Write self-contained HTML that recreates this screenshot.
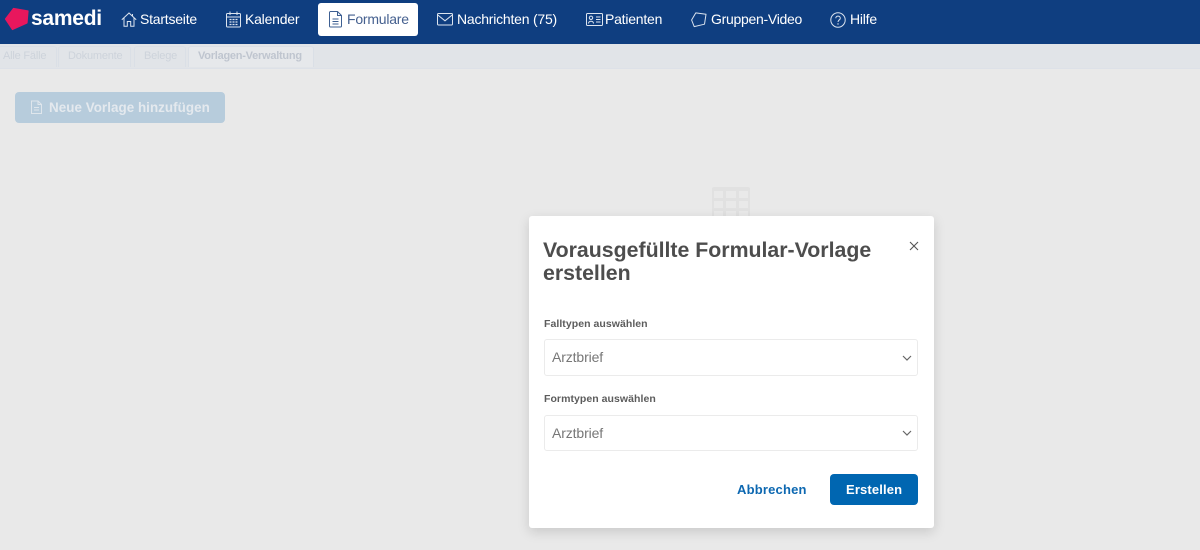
<!DOCTYPE html>
<html lang="de">
<head>
<meta charset="utf-8">
<style>
html,body{margin:0;padding:0;width:1200px;height:550px;overflow:hidden;background:#e9e9e9;font-family:"Liberation Sans",Arial,sans-serif;}
.abs{position:absolute;white-space:nowrap;}
#nav{position:absolute;left:0;top:0;width:1200px;height:44px;background:#0f3e80;}
#sub{position:absolute;left:0;top:44px;width:1200px;height:24px;background:#e1e4e8;border-bottom:1px solid #dde1e8;box-sizing:content-box;}
.nt{color:#fff;font-size:14px;line-height:18px;top:10px;letter-spacing:-.22px;}
.tab{position:absolute;top:46px;height:20px;border:1px solid #dadfe6;border-bottom:none;border-radius:3px 3px 0 0;box-sizing:content-box;}
.tt{font-size:11px;line-height:14px;top:49px;color:#cdd3db;letter-spacing:-.2px;}
svg{position:absolute;overflow:visible;}
#modal{position:absolute;left:529px;top:216px;width:405px;height:312px;background:#fff;border-radius:3px;box-shadow:0 4px 12px rgba(0,0,0,.14);}
.lab{font-size:10.5px;font-weight:bold;color:#5c5c5c;line-height:14px;letter-spacing:.05px;}
.sel{position:absolute;left:544px;width:374px;background:#fff;border:1px solid #ebebeb;border-radius:3px;box-sizing:border-box;}
.val{font-size:14px;color:#777;line-height:18px;letter-spacing:-.12px;}
</style>
</head>
<body>
<div id="nav"></div>
<svg style="left:0;top:0" width="40" height="40" viewBox="0 0 40 40"><path d="M5.500 19 L13.500 8.500 L28 11 L27 23 L12.500 29.500 Z" fill="#e8175d" stroke="#e8175d" stroke-width="1.200" stroke-linejoin="round"/></svg>
<div class="abs" style="left:31px;top:6px;font-size:21px;line-height:26px;font-weight:bold;color:#fff;letter-spacing:-.25px">samedi</div>

<svg style="left:121px;top:12px" width="16" height="15" viewBox="0 0 16 15" fill="none" stroke="#dce4ef" stroke-width="1"><path d="M.8 7.800 L8 1 L15.200 7.800 M3 6 V14.300 H6.300 V9.500 H9.700 V14.300 H13 V6 M11.500 2 V4"/></svg>
<div class="abs nt" style="left:140px">Startseite</div>

<svg style="left:226px;top:11px" width="15" height="17" viewBox="0 0 15 17" fill="none" stroke="#dce4ef" stroke-width="1"><rect x=".5" y="2.500" width="14" height="13.500" rx="1"/><path d="M.5 6 H14.500 M4 .5 V4 M11 .5 V4"/><path d="M3.500 8.500h2M6.500 8.500h2M9.500 8.500h2M3.500 11h2M6.500 11h2M9.500 11h2M3.500 13.500h2M6.500 13.500h2M9.500 13.500h2" stroke-width="1.300"/></svg>
<div class="abs nt" style="left:245px">Kalender</div>

<div style="position:absolute;left:318px;top:3px;width:100px;height:33px;background:#fff;border-radius:3px"></div>
<svg style="left:329px;top:11px" width="13" height="17" viewBox="0 0 13 17" fill="none" stroke="#3d5f92" stroke-width="1"><path d="M.5 1.500 a1 1 0 0 1 1-1 H8.500 L12.500 4.500 V15 a1 1 0 0 1-1 1 H1.500 a1 1 0 0 1-1-1 Z M8.500 .5 V4.500 H12.500 M3.500 8h6M3.500 10.500h6M3.500 13h6"/></svg>
<div class="abs nt" style="left:347px;color:#45608f">Formulare</div>

<svg style="left:437px;top:13px" width="16" height="13" viewBox="0 0 16 13" fill="none" stroke="#dce4ef" stroke-width="1"><rect x=".5" y=".5" width="15" height="11.500" rx="1"/><path d="M.8 2 L8 7.800 L15.200 2"/></svg>
<div class="abs nt" style="left:457px">Nachrichten (75)</div>

<svg style="left:586px;top:13px" width="17" height="13" viewBox="0 0 17 13" fill="none" stroke="#dce4ef" stroke-width="1"><rect x=".5" y=".5" width="16" height="12" rx="1"/><circle cx="5" cy="4.800" r="1.700"/><path d="M2.500 10.500 C2.500 7.500 7.500 7.500 7.500 10.500 M10 4h4.500M10 6.500h4.500M10 9h4.500"/></svg>
<div class="abs nt" style="left:605px">Patienten</div>

<svg style="left:691px;top:12px" width="16" height="15" viewBox="0 0 16 15" fill="none" stroke="#dce4ef" stroke-width="1"><path d="M.6 8 L4.800 .9 L15 2.300 L13.500 12.200 L3.200 14.600 Z" stroke-linejoin="round"/></svg>
<div class="abs nt" style="left:711px;letter-spacing:-.28px">Gruppen-Video</div>

<svg style="left:830px;top:12px" width="16" height="16" viewBox="0 0 16 16" fill="none" stroke="#dce4ef" stroke-width="1"><circle cx="8" cy="8" r="7.200"/><path d="M5.800 6.200 C5.800 3.400 10.300 3.400 10.300 6.200 C10.300 8 8 7.900 8 10"/><path d="M8 11.300 V12.600" stroke-width="1.200"/></svg>
<div class="abs nt" style="left:850px">Hilfe</div>

<div id="sub"></div>
<div class="tab" style="left:-2px;width:57px"></div>
<div class="tab" style="left:58px;width:71px"></div>
<div class="tab" style="left:134px;width:50px"></div>
<div class="tab" style="left:188px;width:124px;background:#e6e8eb"></div>
<div class="abs tt" style="left:3px">Alle Fälle</div>
<div class="abs tt" style="left:68px">Dokumente</div>
<div class="abs tt" style="left:144px">Belege</div>
<div class="abs tt" style="left:198px;font-weight:bold;color:#bfc5cf;letter-spacing:-.25px">Vorlagen-Verwaltung</div>

<div style="position:absolute;left:15px;top:92px;width:210px;height:31px;background:#b7ccdc;border-radius:4px"></div>
<svg style="left:31px;top:100px" width="11" height="14" viewBox="0 0 11 14" fill="none" stroke="#dfe6ec" stroke-width="1"><path d="M.5 1 H7 L10.500 4.500 V13.500 H.5 Z M7 1 V4.500 H10.500 M3 7.500h5M3 10h5"/></svg>
<div class="abs" style="left:49px;top:99px;font-size:13.400px;line-height:17px;font-weight:bold;color:#e4e9ee;letter-spacing:.05px">Neue Vorlage hinzufügen</div>

<svg style="left:712px;top:187px" width="38" height="30" viewBox="0 0 38 30"><rect width="38" height="30" rx="2" fill="#e1e1e1"/><g fill="#e9e9e9"><rect x="2" y="4" width="9" height="7"/><rect x="14" y="4" width="10" height="7"/><rect x="27" y="4" width="9" height="7"/><rect x="2" y="14" width="9" height="7"/><rect x="14" y="14" width="10" height="7"/><rect x="27" y="14" width="9" height="7"/><rect x="2" y="24" width="9" height="6"/><rect x="14" y="24" width="10" height="6"/><rect x="27" y="24" width="9" height="6"/></g></svg>

<div id="modal"></div>
<div class="abs" style="left:543px;top:239px;font-size:21.300px;line-height:23px;font-weight:bold;color:#4d4d4d">Vorausgefüllte Formular-Vorlage<br>erstellen</div>
<svg style="left:909px;top:241px" width="10" height="10" viewBox="0 0 10 10" fill="none" stroke="#555" stroke-width="1.100"><path d="M1 1 L9 9 M9 1 L1 9"/></svg>

<div class="abs lab" style="left:544px;top:317px">Falltypen auswählen</div>
<div class="sel" style="top:339px;height:37px"></div>
<div class="abs val" style="left:552px;top:348px">Arztbrief</div>
<svg style="left:902px;top:355px" width="10" height="7" viewBox="0 0 10 7" fill="none" stroke="#666" stroke-width="1.200"><path d="M1 1 L5 5 L9 1"/></svg>

<div class="abs lab" style="left:544px;top:392px">Formtypen auswählen</div>
<div class="sel" style="top:415px;height:36px"></div>
<div class="abs val" style="left:552px;top:424px">Arztbrief</div>
<svg style="left:902px;top:430px" width="10" height="7" viewBox="0 0 10 7" fill="none" stroke="#666" stroke-width="1.200"><path d="M1 1 L5 5 L9 1"/></svg>

<div class="abs" style="left:737px;top:481px;font-size:13px;line-height:17px;font-weight:bold;color:#0d68b1;letter-spacing:.2px">Abbrechen</div>
<div style="position:absolute;left:830px;top:474px;width:88px;height:31px;background:#0066b1;border-radius:4px"></div>
<div class="abs" style="left:846px;top:481px;font-size:13px;line-height:17px;font-weight:bold;color:#fff;letter-spacing:.15px">Erstellen</div>
</body>
</html>
